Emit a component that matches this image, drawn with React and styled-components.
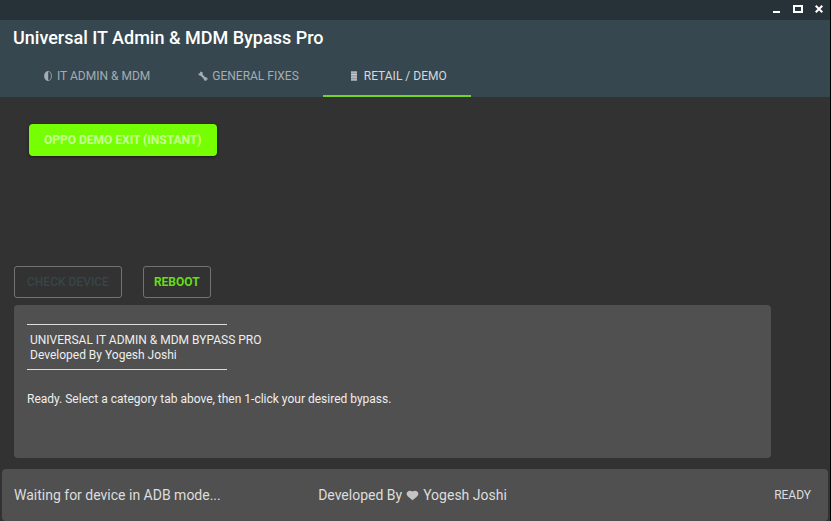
import React, { useState } from "react"
import styled, { createGlobalStyle } from "styled-components"

const GlobalStyle = createGlobalStyle`
  * {
    box-sizing: border-box;
  }

  body {
    margin: 0;
    background: #323232;
    color: #e8e8e8;
    font-family: Roboto, "Liberation Sans", sans-serif;
  }

  button {
    font-family: inherit;
    cursor: pointer;
  }
`

const Window = styled.div`
  display: flex;
  flex-direction: column;
  min-height: 100vh;
  border-right: 1px solid #000;
`

const TitleBar = styled.div`
  display: flex;
  justify-content: flex-end;
  gap: 5px;
  height: 20px;
  padding: 0 3px 2px 0;
  background: #263238;
`

const WindowButton = styled.button`
  display: flex;
  align-items: center;
  justify-content: center;
  width: 16px;
  padding: 0;
  border: 0;
  background: none;
  color: #fff;
`

const Header = styled.header`
  background: #37474f;
`

const Title = styled.h1`
  margin: 0;
  padding: 6px 13px 0;
  font-size: 18px;
  font-weight: 500;
  line-height: 24px;
  color: #fff;
`

const Tabs = styled.div`
  display: flex;
  padding: 6px 20px 0;
`

const Tab = styled.button`
  display: flex;
  align-items: center;
  gap: 4px;
  height: 41px;
  padding: 0 24px;
  border: 0;
  border-bottom: 2px solid ${props => (props.$active ? "#76d32a" : "transparent")};
  background: none;
  font-size: 12px;
  color: ${props => (props.$active ? "#d3d9dc" : "#a3adb2")};
`

const Panel = styled.section`
  flex: 1;
  padding: 27px 29px;
`

const SolidButton = styled.button`
  height: 32px;
  padding: 0 15px;
  border: 0;
  border-radius: 4px;
  background: #76ff03;
  box-shadow: 0 1px 3px rgba(0, 0, 0, 0.5);
  font-size: 12px;
  font-weight: 700;
  color: #c8ff94;
`

const Actions = styled.div`
  display: flex;
  gap: 21px;
  padding: 0 14px 7px;
`

const OutlineButton = styled.button`
  height: 32px;
  padding: 0 ${props => (props.$wide ? 12 : 10)}px;
  border: 1px solid #727272;
  border-radius: 3px;
  background: none;
  font-size: 12px;
  font-weight: ${props => (props.$wide ? 500 : 700)};
  color: #64dd17;

  &:disabled {
    color: #364649;
    cursor: default;
  }
`

const Log = styled.div`
  min-height: 153px;
  margin: 0 59px 11px 14px;
  padding: 13px;
  border-radius: 4px;
  background: #505050;
  font-size: 12px;
  line-height: 15px;
  color: #eee;

  p {
    margin: 0;
  }
`

const LogRule = styled.hr`
  width: 200px;
  height: 1px;
  margin: 6px 0 8px;
  border: 0;
  background: #ddd;
`

const LogHeading = styled.div`
  padding-left: 3px;
`

const LogMessage = styled.div`
  padding-top: 14px;
`

const StatusBar = styled.footer`
  display: grid;
  grid-template-columns: 1fr auto 1fr;
  align-items: center;
  height: 52px;
  margin: 0 2px;
  padding: 0 17px 0 12px;
  border-radius: 4px;
  background: #505050;
  font-size: 14px;
  color: #ddd;
`

const Credit = styled.span`
  display: flex;
  align-items: center;
  gap: 4px;

  svg {
    color: #c4c4c4;
  }
`

const State = styled.span`
  justify-self: end;
  font-size: 12px;
`

const ContrastIcon = () => (
  <svg width="9" height="12" viewBox="0 0 9 12" aria-hidden="true">
    <ellipse cx="4" cy="6" rx="3.4" ry="4.5" fill="none" stroke="currentColor" strokeWidth="0.8" />
    <path d="M4.2 1.5a3.6 4.5 0 0 0 0 9z" fill="currentColor" />
  </svg>
)

const WrenchIcon = () => (
  <svg width="10" height="12" viewBox="0 0 10 12" aria-hidden="true">
    <path d="M2.5 4 7.5 9" stroke="currentColor" strokeWidth="2.2" />
    <path d="M2.4 1.5 4.6 2.2 4.8 4.4 3 5.8 .8 5.2 .3 3.4 1.8 3.6z" fill="currentColor" />
    <path d="M5.6 8.8 7.4 7 9.4 8 9.8 9.8 8.4 9.5 8.2 11 6.4 10.6z" fill="currentColor" />
  </svg>
)

const DeviceIcon = () => (
  <svg width="13" height="12" viewBox="0 0 13 12" aria-hidden="true">
    <path d="M4 1.5h6v9H4z" fill="currentColor" opacity="0.6" />
    <path d="M4 2h6M4 4.5h6M4 7h6M4 10h6" stroke="currentColor" opacity="0.8" />
  </svg>
)

const HeartIcon = () => (
  <svg width="13" height="12" viewBox="0 0 13 12" aria-label="love">
    <path d="M6.5 11.3 2 7.4C-1.6 4.2 2.6 0 6.5 2.6 10.4 0 14.6 4.2 11 7.4z" fill="currentColor" />
  </svg>
)

const tabs = [
  { name: "IT ADMIN & MDM", Icon: ContrastIcon },
  { name: "GENERAL FIXES", Icon: WrenchIcon },
  { name: "RETAIL / DEMO", Icon: DeviceIcon },
]

const App = () => {
  const [active, setActive] = useState(2)

  return (
    <Window>
      <GlobalStyle />
      <TitleBar>
        <WindowButton aria-label="Minimize">
          <svg width="8" height="10"><path d="M0 8h7" stroke="currentColor" strokeWidth="2" /></svg>
        </WindowButton>
        <WindowButton aria-label="Maximize">
          <svg width="10" height="8"><path d="M1 1h8v6H1z" fill="none" stroke="currentColor" strokeWidth="2" /></svg>
        </WindowButton>
        <WindowButton aria-label="Close">
          <svg width="8" height="8"><path d="M.7.7l6.6 6.6M7.3.7.7 7.3" stroke="currentColor" strokeWidth="2" /></svg>
        </WindowButton>
      </TitleBar>
      <Header>
        <Title>Universal IT Admin &amp; MDM Bypass Pro</Title>
        <Tabs role="tablist">
          {tabs.map(({ name, Icon }, i) => (
            <Tab key={name} role="tab" aria-selected={i === active} $active={i === active} onClick={() => setActive(i)}>
              <Icon />
              {name}
            </Tab>
          ))}
        </Tabs>
      </Header>
      <Panel role="tabpanel">
        <SolidButton>OPPO DEMO EXIT (INSTANT)</SolidButton>
      </Panel>
      <Actions>
        <OutlineButton $wide disabled>CHECK DEVICE</OutlineButton>
        <OutlineButton>REBOOT</OutlineButton>
      </Actions>
      <Log role="log">
        <LogRule />
        <LogHeading>
          <p>UNIVERSAL IT ADMIN &amp; MDM BYPASS PRO</p>
          <p>Developed By Yogesh Joshi</p>
        </LogHeading>
        <LogRule />
        <LogMessage>Ready. Select a category tab above, then 1-click your desired bypass.</LogMessage>
      </Log>
      <StatusBar>
        <span>Waiting for device in ADB mode...</span>
        <Credit>
          Developed By
          <HeartIcon />
          Yogesh Joshi
        </Credit>
        <State>READY</State>
      </StatusBar>
    </Window>
  )
}

export default App
